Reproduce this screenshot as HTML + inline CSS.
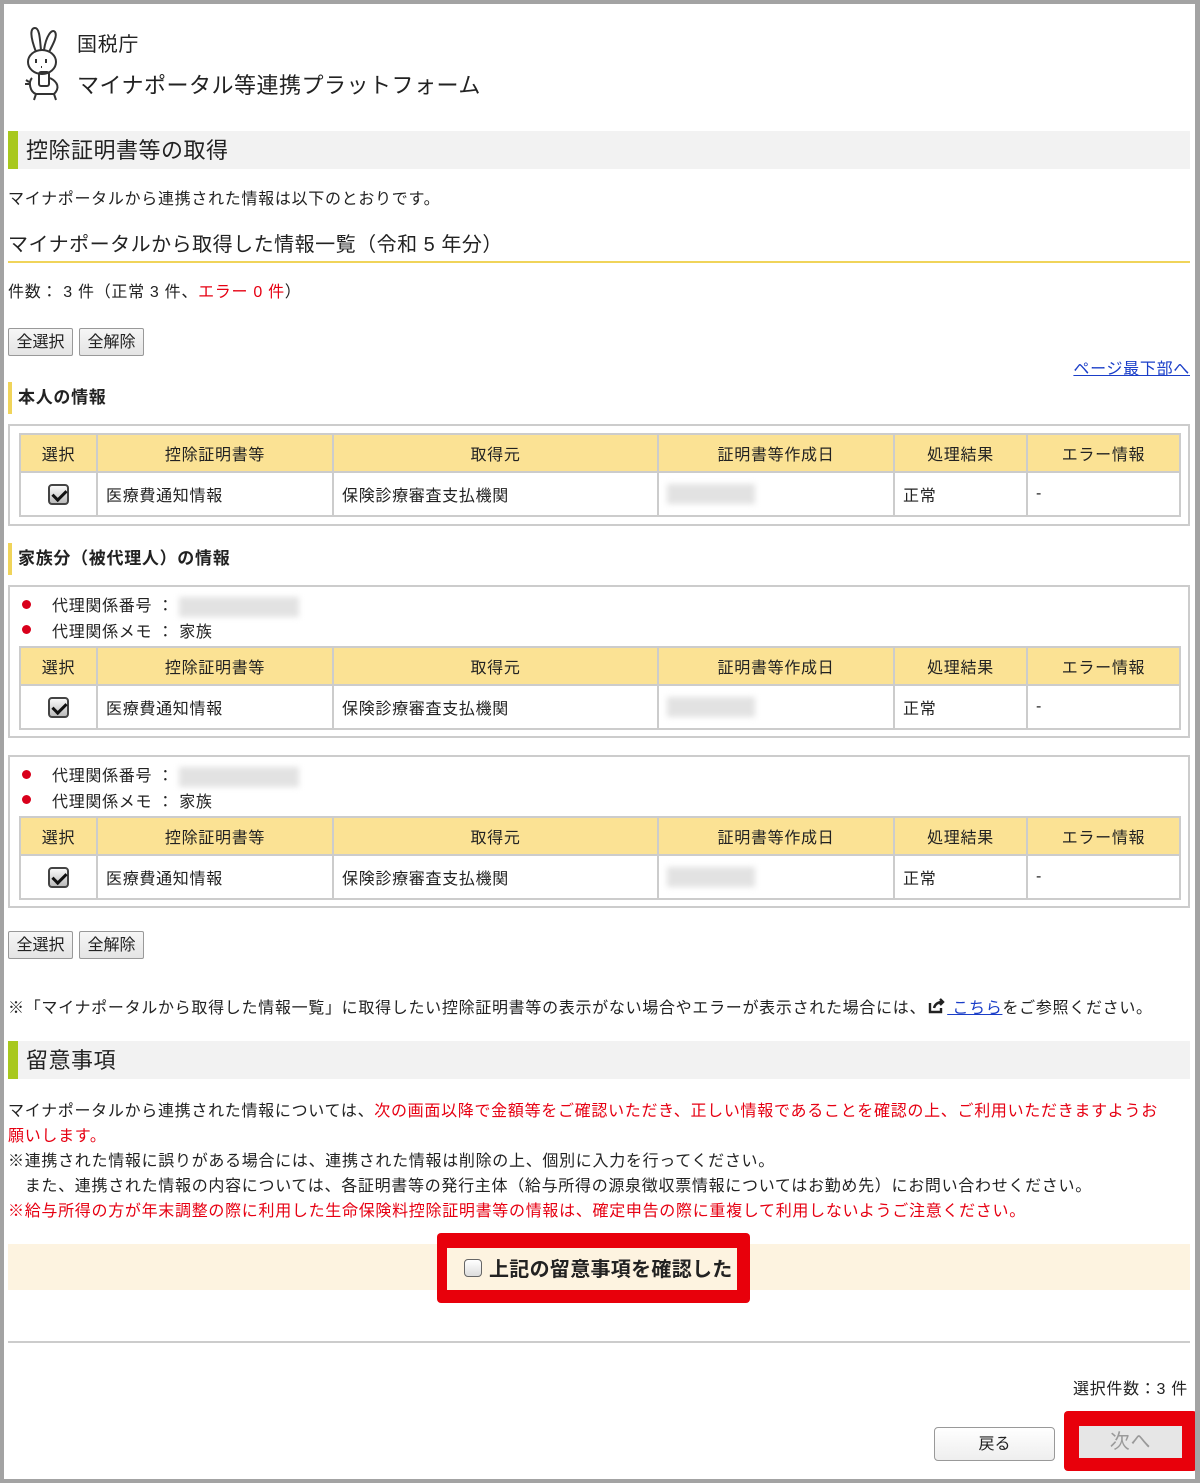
<!DOCTYPE html>
<html><head><meta charset="utf-8"><style>
*{box-sizing:border-box;margin:0;padding:0}
body{width:1200px;height:1483px;position:relative;background:#fff;font-family:"Liberation Sans","Noto Sans CJK JP",sans-serif;color:#222;font-size:16px;overflow:hidden;letter-spacing:0.7px}
.frame{position:absolute;left:0;top:0;width:1200px;height:1483px;border:4px solid #a3a3a3;border-right-width:5px;pointer-events:none}
.a{position:absolute;white-space:nowrap}
.h2{position:absolute;left:8px;width:1182px;height:38px;background:#f2f2f2;border-left:10px solid #a8c81e;font-size:22px;line-height:40px;padding-left:8px;letter-spacing:0.5px}
.h3{position:absolute;left:8px;height:32px;border-left:4px solid #f0d45a;font-size:17px;font-weight:bold;line-height:32px;padding-left:6px}
.btn{position:absolute;height:28px;border:1px solid #999;border-radius:2px;background:linear-gradient(#f6f6f6,#e4e4e4);font-size:16px;line-height:28px;text-align:center;letter-spacing:0}
.box{position:absolute;left:8px;width:1182px;border:2px solid #ccc}
table{position:absolute;left:9px;border-collapse:collapse;table-layout:fixed;width:1162px}
td,th{border:2px solid #ccc;font-weight:normal;font-size:16px}
th{background:#fbe294;height:38px;text-align:center;padding-top:0}
td{height:44px;padding-left:8px}
.cb{display:inline-block;width:21px;height:21px;border:2px solid #444;border-radius:4px;background:linear-gradient(#fafafa,#bbb);position:relative;vertical-align:middle}
.cb:after{content:"";position:absolute;left:5px;top:1px;width:6px;height:11px;border:solid #111;border-width:0 3px 3px 0;transform:rotate(45deg)}
.blur{display:inline-block;background:#e2e2e2;filter:blur(3px);height:20px;vertical-align:middle}
.dot{position:absolute;width:9px;height:9px;border-radius:50%;background:#d9001b}
.red{color:#e60012}
</style></head><body>
<svg class="a" style="left:22px;top:24px" width="48" height="78" viewBox="0 0 48 78" fill="none" stroke="#333" stroke-width="2">
<path d="M14 28 C8 12 8 4 13 4 C18 4 18 18 19 26"/><path d="M22 26 C24 12 30 4 33 8 C36 12 30 22 27 28"/>
<ellipse cx="20" cy="38" rx="14" ry="12"/><path d="M14 35v4M24 35v4M19 43h1"/>
<rect x="17" y="48" width="10" height="14" rx="2"/><path d="M10 54 C6 58 8 68 14 70 L12 76M28 54 C36 58 38 64 32 70 L34 76M14 70h18"/><path d="M4 56l3 2M3 60h4"/>
</svg>
<div class="a" style="left:77px;top:32px;font-size:20px;line-height:26px">国税庁</div>
<div class="a" style="left:77px;top:71px;font-size:22px;line-height:30px;letter-spacing:0.5px">マイナポータル等連携プラットフォーム</div>

<div class="h2" style="top:131px">控除証明書等の取得</div>
<div class="a" style="left:8px;top:190px;line-height:20px">マイナポータルから連携された情報は以下のとおりです。</div>
<div class="a" style="left:8px;top:231px;font-size:20px;line-height:28px;letter-spacing:0.5px">マイナポータルから取得した情報一覧（令和 5 年分）</div>
<div class="a" style="left:8px;top:261px;width:1182px;height:2px;background:#f0d45a"></div>
<div class="a" style="left:8px;top:282px;line-height:22px">件数： 3 件（正常 3 件、<span class="red">エラー 0 件</span>）</div>
<div class="btn" style="left:8px;top:328px;width:65px">全選択</div>
<div class="btn" style="left:79px;top:328px;width:65px">全解除</div>
<div class="a" style="right:10px;top:359px;color:#1a3ec8;text-decoration:underline;line-height:22px">ページ最下部へ</div>

<div class="h3" style="top:382px">本人の情報</div>
<div class="box" style="top:424px;height:102px">
<table style="top:7px"><colgroup><col style="width:77px"><col style="width:236px"><col style="width:325px"><col style="width:236px"><col style="width:133px"><col></colgroup>
<tr><th>選択</th><th>控除証明書等</th><th>取得元</th><th>証明書等作成日</th><th>処理結果</th><th>エラー情報</th></tr>
<tr><td style="text-align:center;padding:0"><span class="cb"></span></td><td>医療費通知情報</td><td>保険診療審査支払機関</td><td><span class="blur" style="width:88px"></span></td><td>正常</td><td>-</td></tr></table></div>

<div class="h3" style="top:543px">家族分（被代理人）の情報</div>
<div class="box" style="top:585px;height:153px">
<div class="dot" style="left:12px;top:13px"></div><div class="a" style="left:42px;top:10px;line-height:20px">代理関係番号 ： <span class="blur" style="width:120px"></span></div>
<div class="dot" style="left:12px;top:38px"></div><div class="a" style="left:42px;top:36px;line-height:20px">代理関係メモ ： 家族</div>
<table style="top:59px"><colgroup><col style="width:77px"><col style="width:236px"><col style="width:325px"><col style="width:236px"><col style="width:133px"><col></colgroup>
<tr><th>選択</th><th>控除証明書等</th><th>取得元</th><th>証明書等作成日</th><th>処理結果</th><th>エラー情報</th></tr>
<tr><td style="text-align:center;padding:0"><span class="cb"></span></td><td>医療費通知情報</td><td>保険診療審査支払機関</td><td><span class="blur" style="width:88px"></span></td><td>正常</td><td>-</td></tr></table></div>

<div class="box" style="top:755px;height:153px">
<div class="dot" style="left:12px;top:13px"></div><div class="a" style="left:42px;top:10px;line-height:20px">代理関係番号 ： <span class="blur" style="width:120px"></span></div>
<div class="dot" style="left:12px;top:38px"></div><div class="a" style="left:42px;top:36px;line-height:20px">代理関係メモ ： 家族</div>
<table style="top:59px"><colgroup><col style="width:77px"><col style="width:236px"><col style="width:325px"><col style="width:236px"><col style="width:133px"><col></colgroup>
<tr><th>選択</th><th>控除証明書等</th><th>取得元</th><th>証明書等作成日</th><th>処理結果</th><th>エラー情報</th></tr>
<tr><td style="text-align:center;padding:0"><span class="cb"></span></td><td>医療費通知情報</td><td>保険診療審査支払機関</td><td><span class="blur" style="width:88px"></span></td><td>正常</td><td>-</td></tr></table></div>

<div class="btn" style="left:8px;top:931px;width:65px">全選択</div>
<div class="btn" style="left:79px;top:931px;width:65px">全解除</div>
<div class="a" style="left:8px;top:998px;line-height:22px">※「マイナポータルから取得した情報一覧」に取得したい控除証明書等の表示がない場合やエラーが表示された場合には、<svg width="18" height="16" viewBox="0 0 18 16" style="vertical-align:-1px;margin:0 1px 0 2px" fill="none" stroke="#222" stroke-width="2.4"><path d="M2 5v9h11v-4"/><path d="M6 10c1-4 4-6 9-6M12 1l3 3-3 3"/></svg><span style="color:#1a3ec8;text-decoration:underline"> こちら</span>をご参照ください。</div>

<div class="h2" style="top:1041px">留意事項</div>
<div class="a" style="left:8px;top:1099px;line-height:25px">マイナポータルから連携された情報については、<span class="red">次の画面以降で金額等をご確認いただき、正しい情報であることを確認の上、ご利用いただきますようお<br>願いします。</span><br>※連携された情報に誤りがある場合には、連携された情報は削除の上、個別に入力を行ってください。<br>　また、連携された情報の内容については、各証明書等の発行主体（給与所得の源泉徴収票情報についてはお勤め先）にお問い合わせください。<br><span class="red">※給与所得の方が年末調整の際に利用した生命保険料控除証明書等の情報は、確定申告の際に重複して利用しないようご注意ください。</span></div>

<div class="a" style="left:8px;top:1244px;width:1182px;height:46px;background:#fdf3e0"></div>
<div class="a" style="left:437px;top:1233px;width:313px;height:70px;background:#e8000b;border-radius:4px"></div>
<div class="a" style="left:447px;top:1248px;width:290px;height:42px;background:#fdf3e0"></div>
<div class="a" style="left:464px;top:1259px;width:18px;height:18px;border:1.5px solid #666;border-radius:4px;background:linear-gradient(#fff,#ddd)"></div>
<div class="a" style="left:489px;top:1256px;font-size:20px;font-weight:bold;line-height:28px;letter-spacing:0.3px">上記の留意事項を確認した</div>

<div class="a" style="left:8px;top:1341px;width:1182px;height:2px;background:#ccc"></div>
<div class="a" style="left:1073px;top:1379px;line-height:22px">選択件数：3 件</div>
<div class="btn" style="left:934px;top:1427px;width:121px;height:34px;line-height:34px;border-radius:4px;background:linear-gradient(#fff,#eee)">戻る</div>
<div class="a" style="left:1064px;top:1411px;width:133px;height:60px;background:#e8000b;border-radius:4px"></div>
<div class="a" style="left:1079px;top:1426px;width:103px;height:32px;background:#e6e6e6;color:#9a9a9a;font-size:20px;line-height:32px;text-align:center">次へ</div>
<div class="frame"></div>
</body></html>
